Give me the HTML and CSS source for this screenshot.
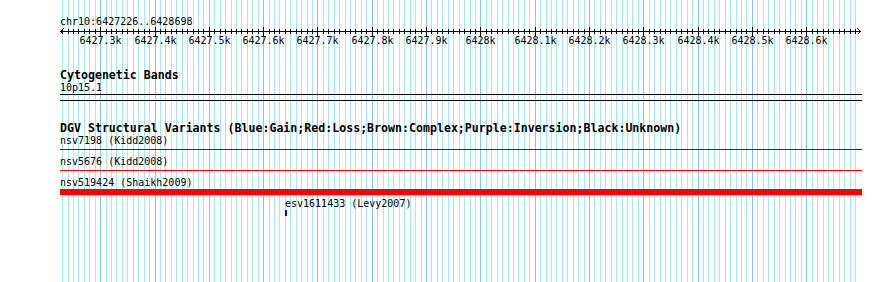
FILE: index.html
```html
<!DOCTYPE html>
<html lang="en">
<head>
<meta charset="UTF-8" />
<title>chr10:6427226..6428698</title>
<link rel="stylesheet" href="styles.css">
</head>
<body>
<div class="panel">
  <svg class="grid" id="grid" width="890" height="282"></svg>

  <div class="ruler">
    <div class="seg">chr10:6427226..6428698</div>
    <svg class="scale" id="scale" width="802" height="18"></svg>
  </div>

  <div class="track cyto">
    <div class="title">Cytogenetic Bands</div>
    <div class="label">10p15.1</div>
    <div class="band"></div>
  </div>

  <div class="track dgv">
    <div class="title">DGV Structural Variants (Blue:Gain;Red:Loss;Brown:Complex;Purple:Inversion;Black:Unknown)</div>
    <div class="feature">
      <div class="label">nsv7198 (Kidd2008)</div>
      <div class="glyph thin purple"></div>
    </div>
    <div class="feature">
      <div class="label">nsv5676 (Kidd2008)</div>
      <div class="glyph thin red"></div>
    </div>
    <div class="feature">
      <div class="label">nsv519424 (Shaikh2009)</div>
      <div class="glyph box red"></div>
    </div>
    <div class="feature short">
      <div class="label">esv1611433 (Levy2007)</div>
      <div class="glyph box blue"></div>
    </div>
  </div>
</div>

<script>
var start = 6427226, end = 6428698, x0 = 60, w = 800;
var NS = 'http://www.w3.org/2000/svg';

function px(bp) {
  return x0 + (bp - start) * w / (end - start + 1);
}

function line(svg, x1, y1, x2, y2, color) {
  var l = document.createElementNS(NS, 'line');
  l.setAttribute('x1', x1); l.setAttribute('y1', y1);
  l.setAttribute('x2', x2); l.setAttribute('y2', y2);
  l.setAttribute('stroke', color);
  svg.appendChild(l);
}

var grid = document.getElementById('grid');
var scale = document.getElementById('scale');

// ruler line with arrows
line(scale, 0, 3.5, 801, 3.5, '#000');
line(scale, 0.5, 3.5, 3.5, 0.5, '#000');
line(scale, 0.5, 3.5, 3.5, 6.5, '#000');
line(scale, 800.5, 3.5, 797.5, 0.5, '#000');
line(scale, 800.5, 3.5, 797.5, 6.5, '#000');

for (var bp = Math.ceil(start / 10) * 10; bp <= end; bp += 10) {
  var x = Math.round(px(bp)) + 0.5;
  var major = bp % 100 === 0;
  line(grid, x, 0, x, 282, major ? '#84c6ee' : '#a8e8ec');
  if (major) {
    line(scale, x - x0, -1, x - x0, 8, '#000');
    var t = document.createElementNS(NS, 'text');
    t.setAttribute('x', x - x0);
    t.setAttribute('y', 16);
    t.setAttribute('text-anchor', 'middle');
    t.textContent = bp % 1000 === 0 ? (bp / 1000) + 'k' : (bp / 1000).toFixed(1) + 'k';
    scale.appendChild(t);
  } else {
    line(scale, x - x0, 1, x - x0, 6, '#000');
  }
}
</script>
</body>
</html>
```

FILE: styles.css
```css
body { margin: 0; background: #fff; font-family: "DejaVu Sans Mono", "Liberation Mono", monospace; font-size: 10px; color: #000; }
.panel { position: relative; width: 890px; height: 282px; padding-left: 60px; box-sizing: border-box; overflow: hidden; }
.grid { position: absolute; left: 0; top: 0; shape-rendering: crispEdges; }
.ruler, .track { position: relative; width: 802px; }
.ruler { padding-top: 16px; }
.seg { line-height: 12px; height: 12px; }
.scale { display: block; overflow: visible; shape-rendering: crispEdges; font-family: "DejaVu Sans Mono", "Liberation Mono", monospace; font-size: 10px; }
.title { font-weight: bold; font-size: 11.6px; line-height: 13px; height: 13px; white-space: nowrap; }
.label { line-height: 12px; height: 11px; white-space: nowrap; }
.cyto { margin-top: 23px; }
.band { margin-top: 1px; height: 5px; border-top: 1px solid #000; border-bottom: 1px solid #000; }
.dgv { margin-top: 21px; }
.feature { height: 21px; }
.glyph.thin { margin-top: 3px; height: 1px; }
.glyph.box { margin-top: 1px; height: 6px; }
.purple { background: #4f0f8f; }
.red { background: #ff0000; }
.short .label { margin-left: 225px; }
.glyph.blue { background: #0000ff; width: 2px; margin-left: 225px; }
```
